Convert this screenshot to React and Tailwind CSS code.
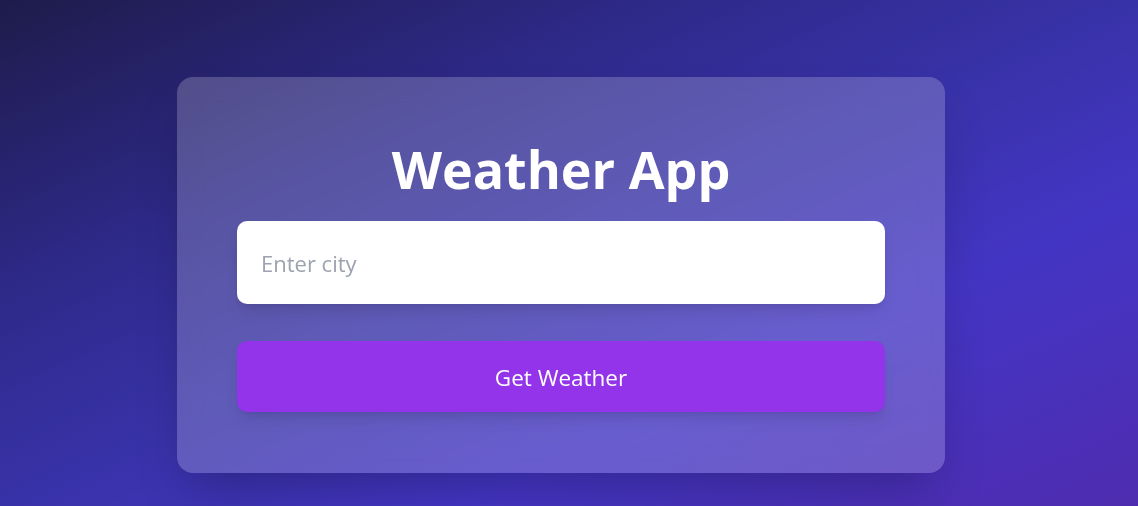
export default function App() {
  return (
    <div className="min-h-screen w-full bg-[linear-gradient(to_bottom_right,#1e1b4b_0%,#2e2a8a_30%,#3832a8_50%,#4335c4_70%,#4a30b8_88%,#4e2cb0_100%)] font-['Open_Sans',sans-serif]">
      <div className="flex w-[1122px] justify-center pt-[77px] pb-[33px]">
        <div className="flex w-[768px] flex-col rounded-2xl bg-white/20 px-[60px] pt-[64px] pb-[61px] shadow-2xl backdrop-blur-md">
          <h1 className="mb-[24px] text-center text-[52px] leading-[56px] font-bold text-white">
            Weather App
          </h1>
          <input
            type="text"
            placeholder="Enter city"
            className="h-[83px] w-full rounded-[10px] bg-white px-6 text-[22px] text-gray-800 shadow-lg outline-none placeholder:text-[#9ca3af]"
          />
          <button className="mt-[37px] h-[71px] w-full rounded-[10px] bg-[#9333ea] pt-[2px] text-[22.5px] text-white shadow-lg">
            Get Weather
          </button>
        </div>
      </div>
    </div>
  );
}
